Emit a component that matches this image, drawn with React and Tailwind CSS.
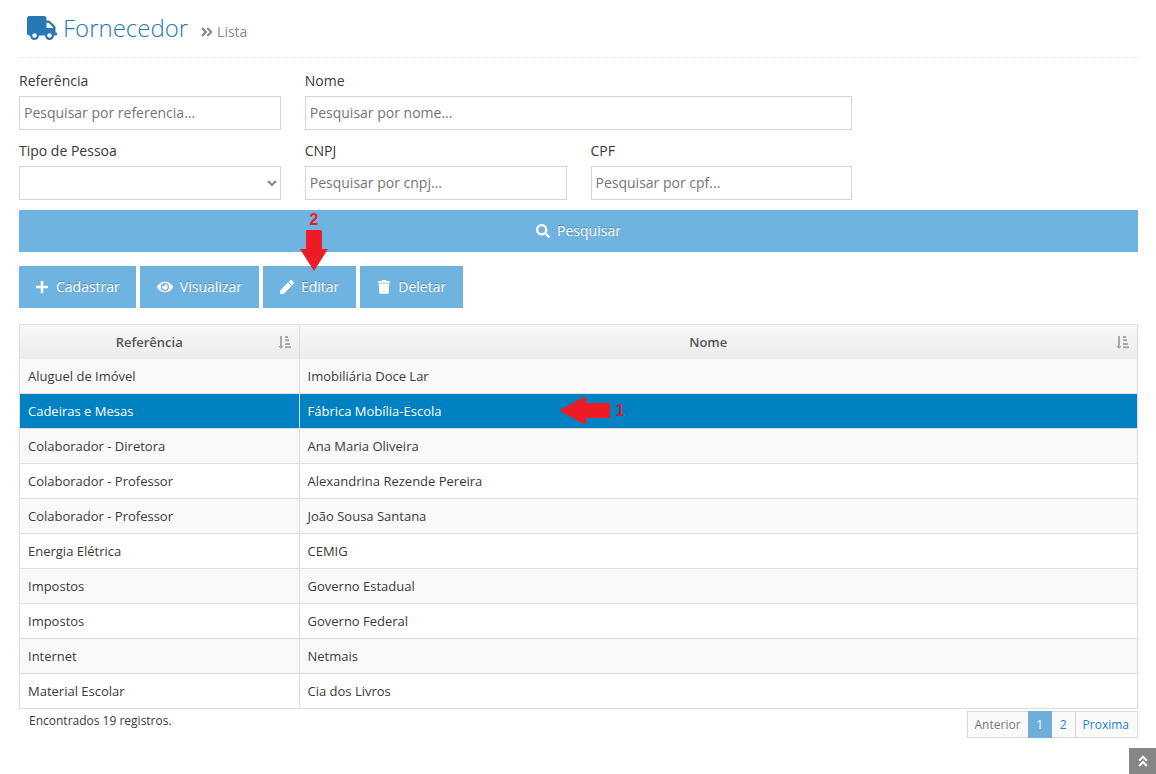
import React from "react";
import {
  FaTruck,
  FaAngleDoubleRight,
  FaAngleDoubleUp,
  FaSearch,
  FaPlus,
  FaEye,
  FaPen,
  FaTrash,
} from "react-icons/fa";

const suppliers = [
  ["Aluguel de Imóvel", "Imobiliária Doce Lar"],
  ["Cadeiras e Mesas", "Fábrica Mobília-Escola"],
  ["Colaborador - Diretora", "Ana Maria Oliveira"],
  ["Colaborador - Professor", "Alexandrina Rezende Pereira"],
  ["Colaborador - Professor", "João Sousa Santana"],
  ["Energia Elétrica", "CEMIG"],
  ["Impostos", "Governo Estadual"],
  ["Impostos", "Governo Federal"],
  ["Internet", "Netmais"],
  ["Material Escolar", "Cia dos Livros"],
];

const SELECTED = 1;

const control =
  "block h-[34px] w-full border border-[#d5d5d5] bg-white px-1 pb-0.5 text-sm text-[#858585] placeholder:text-[#757575]";

function Field({ id, label, className = "", children }) {
  return (
    <div className={className}>
      <label htmlFor={id} className="block h-[26px] text-sm leading-[22px]">
        {label}
      </label>
      {children || (
        <input
          id={id}
          type="text"
          placeholder={`Pesquisar por ${id}...`}
          className={control}
        />
      )}
    </div>
  );
}

function ActionButton({ icon: Icon, iconClass = "size-3.5", children, className = "px-[17px]" }) {
  return (
    <button
      type="button"
      className={`flex h-[42px] items-center justify-center gap-[7px] bg-[#6fb3e0] text-sm text-white [text-shadow:0_-1px_0_rgba(0,0,0,0.25)] ${className}`}
    >
      <Icon className={`shrink-0 ${iconClass}`} />
      <span>{children}</span>
    </button>
  );
}

function SortIcon() {
  return (
    <svg
      width="13"
      height="13"
      viewBox="0 0 13 13"
      fill="#aaa"
      aria-hidden="true"
      className="shrink-0"
    >
      <path d="M2 0h2v10h1.7L3 13 .3 10H2z" />
      <path d="M7 0h3v2H7zM7 3.3h4v2H7zM7 7h5v2H7zM7 10.3h6v2H7z" />
    </svg>
  );
}

function HeaderCell({ children }) {
  return (
    <th
      scope="col"
      className="h-[34px] border-r border-[#ddd] bg-linear-to-b from-[#f8f8f8] to-[#ececec] p-0 font-semibold text-[#555]"
    >
      <div className="flex items-center pr-2 pl-px">
        <span className="flex-1 text-center">{children}</span>
        <SortIcon />
      </div>
    </th>
  );
}

export default function App() {
  return (
    <div className="bg-white font-['Open_Sans',sans-serif] text-[#393939]">
      <main className="pt-2 pr-[18px] pl-[19px]">
        <header className="flex h-[50px] items-start border-b border-dotted border-[#e2e2e2] pl-2 text-[#2679b5]">
          <h1 className="flex items-center gap-1.5 text-2xl leading-10 font-light">
            <FaTruck className="h-6 w-[30px]" />
            Fornecedor
          </h1>
          <small className="mt-1 ml-3 flex items-center gap-[3px] text-sm leading-10 text-[#8089a0]">
            <FaAngleDoubleRight className="size-3.5" />
            Lista
          </small>
        </header>

        <form onSubmit={(e) => e.preventDefault()}>
          <div className="grid grid-cols-4 gap-x-6 gap-y-2.5 pt-3">
            <Field id="referencia" label="Referência" />
            <Field id="nome" label="Nome" className="col-span-2" />
            <Field id="tipo" label="Tipo de Pessoa" className="col-start-1">
              <select id="tipo" className={control} defaultValue="">
                <option value=""></option>
                <option>Física</option>
                <option>Jurídica</option>
              </select>
            </Field>
            <Field id="cnpj" label="CNPJ" />
            <Field id="cpf" label="CPF" />
          </div>
          <ActionButton icon={FaSearch} className="mt-2.5 w-full">
            Pesquisar
          </ActionButton>
        </form>

        <div className="mt-3.5 flex gap-1">
          <ActionButton icon={FaPlus} className="px-4">
            Cadastrar
          </ActionButton>
          <ActionButton icon={FaEye} iconClass="size-4">
            Visualizar
          </ActionButton>
          <div className="relative">
            <ActionButton icon={FaPen}>Editar</ActionButton>
            <div className="pointer-events-none absolute bottom-[37px] left-[37px] flex flex-col items-center font-['Liberation_Sans',sans-serif] text-base leading-5 font-bold text-[#ed1c24]">
              2
              <svg width="28" height="41" viewBox="0 0 28 41" fill="currentColor">
                <path d="M7 0h14l1 1v18h6L14 41 0 19h6V1z" />
              </svg>
            </div>
          </div>
          <ActionButton icon={FaTrash}>Deletar</ActionButton>
        </div>

        <table className="mt-4 w-full table-fixed border-separate border-spacing-0 border-t border-l border-[#ddd] text-[13px] leading-5">
          <colgroup>
            <col className="w-1/4" />
            <col />
          </colgroup>
          <thead>
            <tr>
              <HeaderCell>Referência</HeaderCell>
              <HeaderCell>Nome</HeaderCell>
            </tr>
          </thead>
          <tbody>
            {suppliers.map(([reference, name], i) => {
              const selected = i === SELECTED;
              return (
                <tr
                  key={i}
                  className={
                    selected
                      ? "bg-[#0081c2] text-white"
                      : i % 2 === 0
                        ? "bg-[#f9f9f9]"
                        : "bg-white"
                  }
                >
                  <td className="h-[35px] border-r border-b border-[#ddd] px-2 py-0">
                    {reference}
                  </td>
                  <td className="relative h-[35px] border-r border-b border-[#ddd] px-2 py-0">
                    {name}
                    {selected && (
                      <div className="pointer-events-none absolute top-[3px] left-[259px] flex items-center gap-1.5 font-['Liberation_Sans',sans-serif] text-base font-bold">
                        <svg width="51" height="27" viewBox="0 0 51 27" fill="#ed1c24">
                          <path d="M0 13.5 25 0h2v6h24v15H27v6h-2z" />
                        </svg>
                        <span className="text-[#c4213c]">1</span>
                      </div>
                    )}
                  </td>
                </tr>
              );
            })}
          </tbody>
        </table>

        <footer className="flex items-start justify-between pt-0.5 text-xs">
          <p className="pl-2.5 leading-5">Encontrados 19 registros.</p>
          <nav
            aria-label="Paginação"
            className="flex h-[27px] border border-[#d9d9d9] bg-[#fafafa] leading-[25px] text-[#2283c5]"
          >
            <a href="#anterior" className="px-[7px] text-[#777]">
              Anterior
            </a>
            <a
              href="#1"
              aria-current="page"
              className="-my-px w-6 bg-[#6faed9] pt-px text-center text-white"
            >
              1
            </a>
            <a href="#2" className="w-6 border-r border-[#d9d9d9] text-center">
              2
            </a>
            <a href="#proxima" className="pr-2 pl-[7px]">
              Proxima
            </a>
          </nav>
        </footer>
      </main>

      <div className="mt-2.5 flex justify-end">
        <a
          href="#topo"
          aria-label="Voltar ao topo"
          className="flex h-[26px] w-[27px] items-center justify-center bg-[#868686] text-white"
        >
          <FaAngleDoubleUp className="size-3.5" />
        </a>
      </div>
    </div>
  );
}
